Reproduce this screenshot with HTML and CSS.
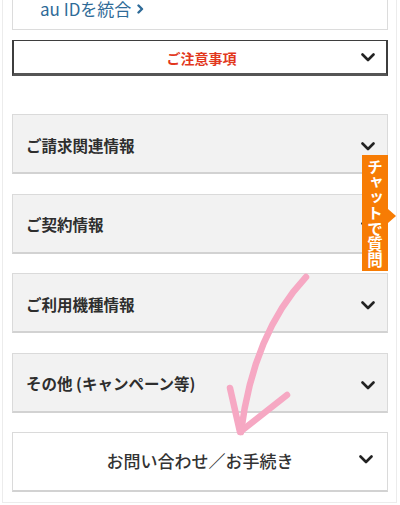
FILE: index.html
```html
<!DOCTYPE html>
<html lang="ja">
<head>
  <meta charset="UTF-8" />
  <meta name="viewport" content="width=device-width, initial-scale=1.0"/>
  <title>サポート</title>
  <link rel="stylesheet" href="styles.css">
</head>
<body>
  <div class="wrap">
    <div class="id-box">
      <a class="id-link" href="#">au IDを統合<svg class="id-arrow" viewBox="0 0 7 10"><polyline points="1.5,1.5 5,5 1.5,8.5"/></svg></a>
    </div>

    <div class="notice">
      <span></span>
      <span class="notice-title">ご注意事項</span>
      <svg class="chev" viewBox="0 0 14 9"><polyline points="1.5,1.5 7,7 12.5,1.5"/></svg>
    </div>

    <div class="menu">
      <div class="menu-item">
        <span>ご請求関連情報</span>
        <svg class="chev" viewBox="0 0 14 9"><polyline points="1.5,1.5 7,7 12.5,1.5"/></svg>
      </div>
      <div class="menu-item">
        <span>ご契約情報</span>
        <svg class="chev" viewBox="0 0 14 9"><polyline points="1.5,1.5 7,7 12.5,1.5"/></svg>
      </div>
      <div class="menu-item">
        <span>ご利用機種情報</span>
        <svg class="chev" viewBox="0 0 14 9"><polyline points="1.5,1.5 7,7 12.5,1.5"/></svg>
      </div>
      <div class="menu-item">
        <span>その他 (キャンペーン等)</span>
        <svg class="chev" viewBox="0 0 14 9"><polyline points="1.5,1.5 7,7 12.5,1.5"/></svg>
      </div>
      <div class="menu-item contact">
        <span></span>
        <span class="contact-title">お問い合わせ／お手続き</span>
        <svg class="chev" viewBox="0 0 14 9"><polyline points="1.5,1.5 7,7 12.5,1.5"/></svg>
      </div>
    </div>
  </div>

  <!-- floating chat tab -->
  <a class="chat-tab" href="#">チャットで質問</a>

  <!-- hand-drawn arrow pointing at the contact row -->
  <svg class="scribble" viewBox="0 0 400 505">
    <path d="M306 277 C 275 310, 250 360, 241 432"/>
    <path d="M230 388 L 240 432 L 287 395"/>
  </svg>
</body>
</html>
```

FILE: styles.css
```css
body {
  margin: 0;
  font-family: "Noto Sans CJK JP", "Noto Sans", sans-serif;
  background: #fff;
  color: #333;
  position: relative;
  width: 400px;
  height: 505px;
  overflow: hidden;
}

.wrap {
  margin: 0 3px 0 2px;
  padding: 0 8px 10px 9px;
  border-left: 1px solid #ececec;
  border-right: 1px solid #ececec;
  border-bottom: 1px solid #ececec;
}

.id-box {
  height: 30px;
  box-sizing: border-box;
  border: 1px solid #dcdcdc;
  border-top: none;
  padding: 0 0 0 27px;
}

.id-link {
  display: flex;
  align-items: center;
  height: 17px;
  line-height: 17px;
  color: #2f6b98;
  font-size: 17px;
  text-decoration: none;
}

.id-arrow {
  width: 7px;
  height: 10px;
  margin-left: 6px;
  fill: none;
  stroke: #2f6b98;
  stroke-width: 2.4;
  stroke-linecap: round;
  stroke-linejoin: round;
}

.notice {
  margin-top: 10px;
  height: 36px;
  box-sizing: border-box;
  border: 2px solid #3e3e3e;
  border-top-width: 1.5px;
  border-bottom-width: 3px;
  border-bottom-color: #555;
  display: grid;
  grid-template-columns: 1fr auto 1fr;
  align-items: center;
  padding: 0 11px 0 14px;
}

.notice-title {
  color: #e2371d;
  font-size: 14px;
  font-weight: bold;
  padding-top: 1px;
}

.chev {
  width: 14px;
  height: 9px;
  justify-self: end;
  fill: none;
  stroke: #222;
  stroke-width: 2.6;
  stroke-linecap: round;
  stroke-linejoin: round;
}

.menu {
  margin-top: 38px;
  display: flex;
  flex-direction: column;
  gap: 19.5px;
}

.menu-item {
  height: 60px;
  box-sizing: border-box;
  background: #f2f2f2;
  border: 1px solid #dadada;
  border-bottom: 2px solid #d2d2d2;
  display: flex;
  align-items: center;
  justify-content: space-between;
  padding: 2px 12px 0 13px;
  font-size: 15.5px;
  font-weight: bold;
  color: #2e2e2e;
}

.menu-item .chev {
  margin-top: 4px;
}

.menu-item.contact {
  background: #fff;
  display: grid;
  grid-template-columns: 1fr auto 1fr;
  padding: 0 14px 0 14px;
}

.contact-title {
  font-size: 17px;
  font-weight: 500;
  color: #333;
  padding-bottom: 3px;
}

.menu-item.contact .chev {
  margin-top: 0;
  margin-bottom: 5px;
}

.chat-tab {
  position: absolute;
  left: 362px;
  top: 155px;
  width: 26px;
  height: 116px;
  background: #f77c04;
  color: #fff;
  font-size: 15.5px;
  font-weight: bold;
  writing-mode: vertical-rl;
  text-orientation: upright;
  display: flex;
  align-items: center;
  justify-content: center;
  text-decoration: none;
  line-height: 26px;
}

.chat-tab::after {
  content: "";
  position: absolute;
  right: -8px;
  top: 54px;
  border-top: 7px solid transparent;
  border-bottom: 7px solid transparent;
  border-left: 8px solid #f77c04;
}

.scribble {
  position: absolute;
  left: 0;
  top: 0;
  width: 400px;
  height: 505px;
  pointer-events: none;
  fill: none;
  stroke: #f6a8c3;
  stroke-width: 6.5;
  stroke-linecap: round;
  stroke-linejoin: round;
}
```
